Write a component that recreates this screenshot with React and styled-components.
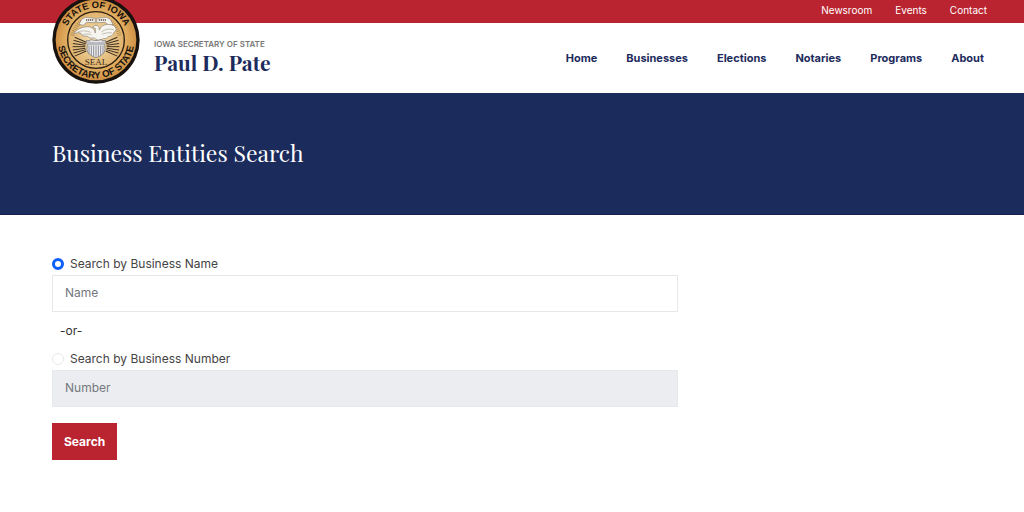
import React from "react";
import styled, { createGlobalStyle } from "styled-components";

const GlobalStyle = createGlobalStyle`
  * {
    box-sizing: border-box;
  }
  body {
    margin: 0;
    background: #fff;
    color: #444;
    font-family: Inter, "Liberation Sans", sans-serif;
    font-size: 12px;
    line-height: 18px;
  }
  a {
    color: inherit;
    text-decoration: none;
  }
`;

const serif = `"Playfair Display", "Liberation Serif", serif`;

const TopBar = styled.nav`
  display: flex;
  justify-content: flex-end;
  gap: 23px;
  height: 23px;
  padding: 1px 37px 0 52px;
  background: #ba2430;
  color: #fff;
  font-size: 10px;
`;

const Header = styled.header`
  display: flex;
  align-items: center;
  justify-content: space-between;
  height: 70px;
  padding: 0 40px 0 52px;
`;

const Brand = styled.a`
  display: flex;
  align-items: center;
  gap: 14px;
`;

const SealSvg = styled.svg`
  display: block;
  width: 88px;
  height: 88px;
  margin-top: -36px;
`;

const BrandText = styled.div`
  display: flex;
  flex-direction: column;
  padding-bottom: 6px;
`;

const Office = styled.span`
  color: #777;
  font-size: 8px;
  font-weight: 600;
  line-height: 14px;
`;

const Official = styled.span`
  color: #1c2b5c;
  font-family: ${serif};
  font-size: 21px;
  font-weight: 700;
  line-height: 22px;
`;

const MainNav = styled.nav`
  display: flex;
  gap: 29px;
  color: #1c2b5c;
  font-size: 11px;
  font-weight: 700;
`;

const Hero = styled.section`
  padding: 44px 52px 45px;
  background: #1b2b5b;
  border-bottom: 1px solid #141f4c;
`;

const Title = styled.h1`
  margin: 0;
  color: #fff;
  font-family: ${serif};
  font-size: 23px;
  font-weight: 400;
  line-height: 32px;
`;

const Content = styled.main`
  padding: 39px 52px;
`;

const Form = styled.form`
  width: 68%;
`;

const Option = styled.label`
  display: flex;
  align-items: center;
  gap: 6px;
  height: 21px;
  padding-bottom: 2px;
`;

const Radio = styled.input`
  appearance: none;
  width: 12px;
  height: 12px;
  margin: 0;
  border: 1px solid #e6e9eb;
  border-radius: 50%;
  background: #fff;
  &:checked {
    border: 3px solid #0d5ffd;
  }
`;

const Field = styled.input`
  display: block;
  width: 100%;
  height: 37px;
  padding: 0 12px 2px;
  border: 1px solid #e6e9eb;
  border-radius: 0;
  outline: none;
  background: #fff;
  color: #444;
  font: inherit;
  &::placeholder {
    color: #75797e;
    opacity: 1;
  }
  &:disabled {
    background: #ebedf0;
  }
`;

const Divider = styled.p`
  margin: 10px 8px 9px;
  color: #333;
`;

const SearchButton = styled.button`
  height: 37px;
  margin-top: 16px;
  padding: 0 12px;
  border: 0;
  background: #ba2430;
  color: #fff;
  font: inherit;
  font-weight: 700;
  cursor: pointer;
`;

const topLinks = ["Newsroom", "Events", "Contact"];
const mainLinks = [
  "Home",
  "Businesses",
  "Elections",
  "Notaries",
  "Programs",
  "About",
];

// rays on both sides of the shield, in degrees
const rays = [-24, -16, -8, 0, 8, 16, 24];

const Seal = () => (
  <SealSvg viewBox="36 -12 264 264" role="img" aria-label="State seal">
    <defs>
      <radialGradient id="gold">
        <stop offset="0.7" stopColor="#e3b265" />
        <stop offset="1" stopColor="#cf9044" />
      </radialGradient>
      <radialGradient id="field">
        <stop offset="0" stopColor="#f7e3bb" />
        <stop offset="1" stopColor="#dfb26b" />
      </radialGradient>
      <path id="arcTop" d="M72 120a96 96 0 0 1 192 0" />
      <path id="arcBottom" d="M53 100v20a115 115 0 0 0 230 0v-20" />
    </defs>
    <circle cx="168" cy="120" r="131" fill="#17120e" />
    <circle cx="168" cy="120" r="121" fill="url(#gold)" />
    <circle
      cx="168"
      cy="120"
      r="85"
      fill="url(#field)"
      stroke="#2a1d10"
      strokeWidth="4"
    />
    <g
      fill="#17120e"
      fontFamily="Liberation Sans, sans-serif"
      fontWeight="700"
      textAnchor="middle"
    >
      <text fontSize="28">
        <textPath href="#arcTop" startOffset="50%">
          STATE OF IOWA
        </textPath>
      </text>
      <text fontSize="29">
        <textPath href="#arcBottom" startOffset="50%">
          SECRETARY OF STATE
        </textPath>
      </text>
    </g>
    <g stroke="#3d2e1c" strokeWidth="3">
      {rays.map((deg) => (
        <React.Fragment key={deg}>
          <path d="M136 140H98" transform={`rotate(${deg} 168 140)`} />
          <path d="M200 140H238" transform={`rotate(${deg} 168 140)`} />
        </React.Fragment>
      ))}
    </g>
    <path
      d="M98 106a72 72 0 0 1 26-42M238 106a72 72 0 0 0-26-42"
      fill="none"
      stroke="#a57a3c"
      strokeWidth="12"
      strokeDasharray="2 4"
    />
    <g fill="#f6f4ee" stroke="#8b8478" strokeWidth="2" strokeLinejoin="round">
      <path d="M117 73l8-15 12-6 29 3 0 13-26-1-10 9z" />
      <path d="M219 73l-8-15-12-6-29 3 0 13 26-1 10 9z" />
      <path d="M138 60h22M176 60h22" stroke="#5d574e" strokeWidth="4" strokeDasharray="4 2" />
      <path d="M166 99q-4-19-23-19-28 1-43 21 14-5 22-2 4 12 19 9 8 9 21 6l14 8 14-6q12 2 15-7 13 1 16-11 6-2 8-11-5-14-25-14-20 1-26 17l-1-8q-4-8-12-6l-7 6 8 3z" />
    </g>
    <path
      d="M112 97q18-9 40 0M128 104q14-5 26 0M184 96q18-14 38-6M186 103q16-8 30-4"
      fill="none"
      stroke="#aba69b"
      strokeWidth="2"
    />
    <path
      d="M139 122q9 2 14-3 15 6 30 0 5 5 14 3-5 13-2 26 0 16-27 25-27-9-27-25 3-13-2-26z"
      fill="#eeeef0"
      stroke="#66635f"
      strokeWidth="2"
    />
    <path d="M141 124q27 5 54 0l-3 12h-48z" fill="#b7b9bf" />
    <path
      d="M147 137v24M154 137v28M161 137v31M168 137v33M175 137v31M182 137v28M189 137v24"
      stroke="#8d8e93"
      strokeWidth="3"
    />
    <text
      x="168"
      y="196"
      fill="#3c2c18"
      fontFamily="Liberation Serif, serif"
      fontSize="27"
      textAnchor="middle"
    >
      SEAL
    </text>
  </SealSvg>
);

const App = () => {
  const [searchBy, setSearchBy] = React.useState("name");

  const onChange = React.useCallback((e) => {
    setSearchBy(e.target.value);
  }, []);

  const onSubmit = React.useCallback((e) => {
    e.preventDefault();
  }, []);

  return (
    <>
      <GlobalStyle />
      <TopBar aria-label="Secondary">
        {topLinks.map((v) => (
          <a key={v} href="#">
            {v}
          </a>
        ))}
      </TopBar>
      <Header>
        <Brand href="#">
          <Seal />
          <BrandText>
            <Office>IOWA SECRETARY OF STATE</Office>
            <Official>Paul D. Pate</Official>
          </BrandText>
        </Brand>
        <MainNav aria-label="Main">
          {mainLinks.map((v) => (
            <a key={v} href="#">
              {v}
            </a>
          ))}
        </MainNav>
      </Header>
      <Hero>
        <Title>Business Entities Search</Title>
      </Hero>
      <Content>
        <Form onSubmit={onSubmit}>
          <Option>
            <Radio
              type="radio"
              name="searchBy"
              value="name"
              checked={searchBy === "name"}
              onChange={onChange}
            />
            Search by Business Name
          </Option>
          <Field
            type="text"
            name="name"
            placeholder="Name"
            aria-label="Business name"
            disabled={searchBy !== "name"}
          />
          <Divider>-or-</Divider>
          <Option>
            <Radio
              type="radio"
              name="searchBy"
              value="number"
              checked={searchBy === "number"}
              onChange={onChange}
            />
            Search by Business Number
          </Option>
          <Field
            type="text"
            name="number"
            placeholder="Number"
            aria-label="Business number"
            disabled={searchBy !== "number"}
          />
          <SearchButton type="submit">Search</SearchButton>
        </Form>
      </Content>
    </>
  );
};

export default App;
